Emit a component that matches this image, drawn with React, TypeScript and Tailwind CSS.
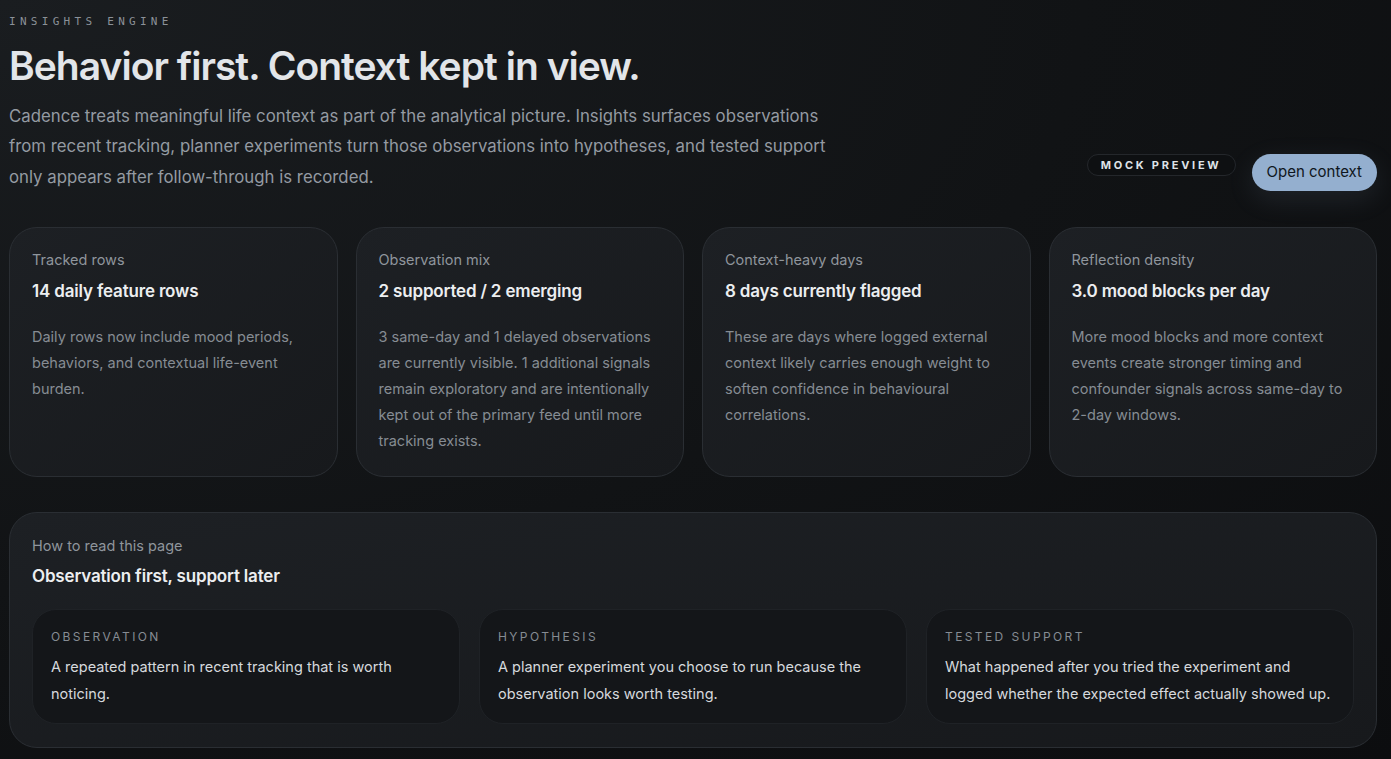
import type { ReactNode } from 'react';

const STATS: Array<[string, string, string]> = [
  ['Tracked rows', '14 daily feature rows', 'Daily rows now include mood periods, behaviors, and contextual life-event burden.'],
  ['Observation mix', '2 supported / 2 emerging', '3 same-day and 1 delayed observations are currently visible. 1 additional signals remain exploratory and are intentionally kept out of the primary feed until more tracking exists.'],
  ['Context-heavy days', '8 days currently flagged', 'These are days where logged external context likely carries enough weight to soften confidence in behavioural correlations.'],
  ['Reflection density', '3.0 mood blocks per day', 'More mood blocks and more context events create stronger timing and confounder signals across same-day to 2-day windows.'],
];

const STEPS: Array<[string, string]> = [
  ['Observation', 'A repeated pattern in recent tracking that is worth noticing.'],
  ['Hypothesis', 'A planner experiment you choose to run because the observation looks worth testing.'],
  ['Tested support', 'What happened after you tried the experiment and logged whether the expected effect actually showed up.'],
];

function Panel({ children, className }: { children: ReactNode; className?: string }) {
  return (
    <div className={'rounded-[28px] border border-[#2a2e33] bg-gradient-to-br from-[#1d2024] to-[#17191c] ' + (className ?? '')}>
      {children}
    </div>
  );
}

export default function App() {
  return (
    <div className="min-h-[759px] w-full bg-[radial-gradient(ellipse_at_top_left,#1a1d20_0%,#111315_55%,#0c0d0f_100%)] px-[9px] pt-[14px] pb-3 font-['Inter',sans-serif] text-[#e4e6e9]">
      <div className="font-['DejaVu_Sans_Mono',monospace] text-[11px] tracking-[0.39em] text-[#8b9198]">INSIGHTS ENGINE</div>
      <h1 className="mt-[11px] text-[39px] font-semibold leading-[48px] tracking-[-0.025em] text-[#e2e5e9]">
        Behavior first. Context kept in view.
      </h1>
      <div className="mt-[11px] flex items-start justify-between">
        <p className="w-[840px] text-[16.8px] leading-[30.5px] text-[#949aa2]">
          Cadence treats meaningful life context as part of the analytical picture. Insights surfaces observations from recent tracking, planner experiments turn those observations into hypotheses, and tested support only appears after follow-through is recorded.
        </p>
        <div className="mt-[53px] mr-[5px] flex items-start gap-4">
          <span className="rounded-full border border-[#24272b] bg-[#0e1012] px-[13px] py-[2px] text-[11px] font-bold tracking-[0.25em] text-[#dfe3e8]">MOCK PREVIEW</span>
          <button className="h-[37px] rounded-full bg-[#94afcf] px-[15px] text-[15px] text-[#0f1620] shadow-[0_8px_28px_rgba(148,175,207,0.12)]">Open context</button>
        </div>
      </div>

      <div className="mt-[35px] grid grid-cols-4 gap-[18px] pr-[5px]">
        {STATS.map(([label, title, body]) => (
          <Panel key={label} className="h-[250px] px-[22px] pt-[21px]">
            <div className="text-[14.5px] text-[#8f959c]">{label}</div>
            <div className="mt-[8px] text-[17px] font-semibold tracking-[-0.01em] text-[#eceef0]">{title}</div>
            <p className="mt-[20px] text-[14.5px] leading-[26px] text-[#868c93]">{body}</p>
          </Panel>
        ))}
      </div>

      <Panel className="mt-[35px] mr-[5px] px-[22px] pt-[22px] pb-[23px]">
        <div className="text-[14.5px] text-[#8f959c]">How to read this page</div>
        <div className="mt-[7px] text-[17px] font-semibold tracking-[-0.01em] text-[#eceef0]">Observation first, support later</div>
        <div className="mt-[20px] grid grid-cols-3 gap-[19px]">
          {STEPS.map(([label, body]) => (
            <div key={label} className="h-[115px] rounded-[24px] border border-[#1f2226] bg-[#141619] px-[18px] pt-[18px]">
              <div className="text-[12px] uppercase tracking-[0.2em] text-[#868c93]">{label}</div>
              <p className="mt-[7px] text-[14.5px] leading-[27px] text-[#d6d9dd]">{body}</p>
            </div>
          ))}
        </div>
      </Panel>
    </div>
  );
}
